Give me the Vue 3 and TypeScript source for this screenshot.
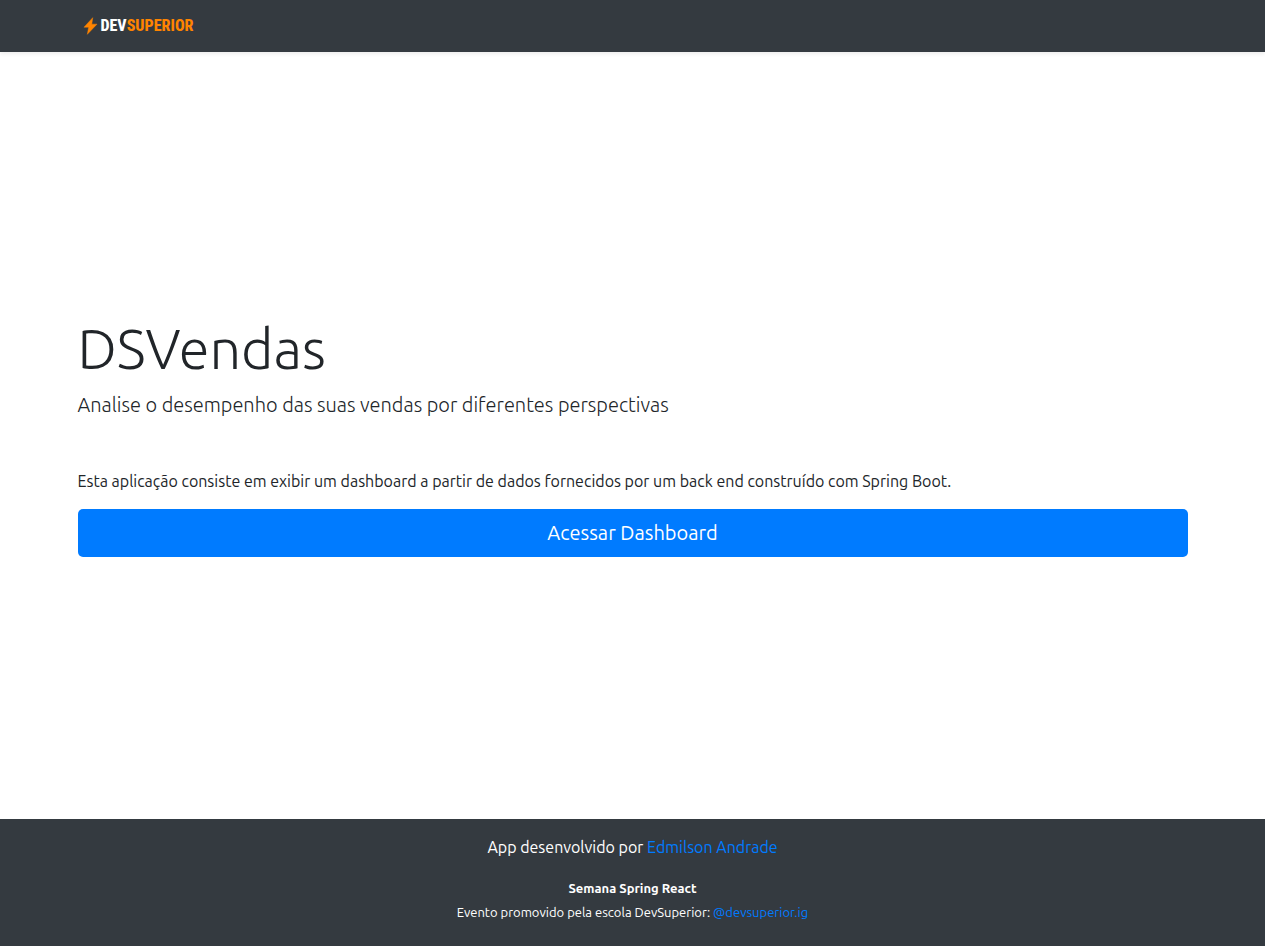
<script setup lang="ts">
interface Credit {
  label: string
  name: string
  href: string
}

const author: Credit = { label: 'App desenvolvido por', name: 'Edmilson Andrade', href: '#autor' }
const school: Credit = { label: 'Evento promovido pela escola DevSuperior:', name: '@devsuperior.ig', href: '#devsuperior' }
</script>

<template>
  <div class="page">
    <header class="topbar">
      <nav class="container">
        <a class="brand" href="#inicio" aria-label="DevSuperior">
          <svg class="bolt" viewBox="0 0 14 18" aria-hidden="true">
            <path d="M9.4 0 0 10.3h5L3.6 18 14 7H8.4z" fill="#ff8400" stroke="#ff8400" stroke-width=".5" stroke-linejoin="round" />
          </svg>
          <span class="wordmark">DEV<span class="accent">SUPERIOR</span></span>
        </a>
      </nav>
    </header>

    <main class="container hero">
      <h1>DSVendas</h1>
      <p class="lead">Analise o desempenho das suas vendas por diferentes perspectivas</p>
      <p class="about">Esta aplicação consiste em exibir um dashboard a partir de dados fornecidos por um back end construído com Spring Boot.</p>
      <a class="button" href="#dashboard">Acessar Dashboard</a>
    </main>

    <footer class="footer">
      <p class="author">{{ author.label }} <a :href="author.href">{{ author.name }}</a></p>
      <p class="event">Semana Spring React</p>
      <p class="school">{{ school.label }} <a :href="school.href">{{ school.name }}</a></p>
    </footer>
  </div>
</template>

<style>
body {
  margin: 0;
}
</style>

<style scoped>
.page {
  display: flex;
  flex-direction: column;
  min-height: 100vh;
  background: #fff;
  color: #212529;
  font: 400 16px/24px Ubuntu, "Noto Sans", sans-serif;
}

h1,
p {
  margin: 0;
}

a {
  color: #007bff;
  text-decoration: none;
}

.container {
  box-sizing: border-box;
  width: 100%;
  max-width: 1140px;
  margin: 0 auto;
  padding: 0 15px;
}

.topbar {
  background: #343a40;
  box-shadow: 0 2px 4px rgba(0, 0, 0, 0.075);
}

.topbar .container {
  display: flex;
  align-items: center;
  height: 52px;
}

.brand {
  display: flex;
  align-items: center;
  gap: 4px;
  padding-left: 6px;
}

.bolt {
  width: 13px;
  height: 18px;
  overflow: visible;
}

.wordmark {
  color: #fff;
  font: 800 16px/18px "Roboto Condensed", "Liberation Sans Narrow", "Liberation Sans", sans-serif;
}

.accent {
  color: #ff8400;
}

.hero {
  display: flex;
  flex: 1;
  flex-direction: column;
  justify-content: center;
}

h1 {
  font: 300 56px/67px Ubuntu, "Open Sans", sans-serif;
}

.lead {
  margin: 8px 0 49px;
  font-size: 20px;
  font-weight: 300;
  line-height: 30px;
}

.about {
  margin-bottom: 16px;
}

.button {
  padding: 9px 17px;
  border-radius: 5px;
  background: #007bff;
  color: #fff;
  font-size: 20px;
  line-height: 30px;
  text-align: center;
}

.footer {
  padding: 16px 16px 22px;
  background: #343a40;
  color: #fff;
  text-align: center;
}

.author {
  margin-bottom: 17px;
}

.event,
.school {
  font-size: 13px;
}

.event {
  font-weight: 700;
}
</style>
